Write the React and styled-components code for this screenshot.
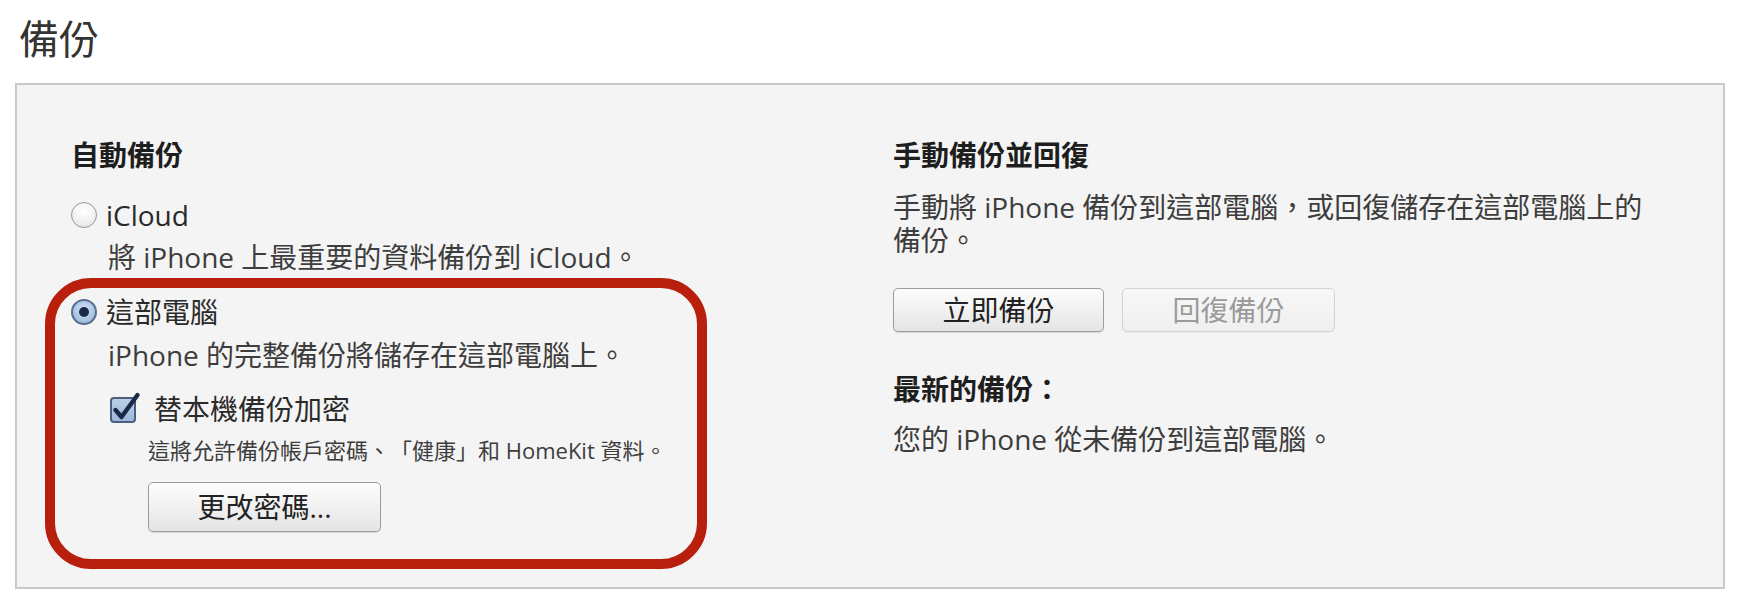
import React from "react";
import styled, { createGlobalStyle } from "styled-components";

const GlobalStyle = createGlobalStyle`
  html, body { margin: 0; padding: 0; background: #ffffff; }
  body {
    font-family: "Open Sans", "Noto Sans CJK TC", sans-serif;
    color: #3d3d3d;
    text-spacing-trim: space-all;
  }
`;

const Page = styled.div`
  width: 1741px;
  height: 604px;
  overflow: hidden;
  background: #fff;
`;

const Title = styled.h1`
  margin: 0;
  padding: 15px 0 0 19px;
  font-size: 40px;
  line-height: 48px;
  font-weight: 400;
  color: #333;
`;

const Panel = styled.section`
  margin: 20px 16px 0 15px;
  border: 2px solid #c9c9c9;
  background: #f4f4f4;
  padding: 52px 0 55px 54px;
  display: grid;
  grid-template-columns: 822px 1fr;
`;

const Column = styled.div`
  display: flex;
  flex-direction: column;
  align-items: flex-start;
`;

const Heading = styled.h2`
  margin: ${(p) => p.$mt || 0}px 0 0 0;
  font-size: 28px;
  line-height: 36px;
  font-weight: 700;
  color: #1e1e1e;
`;

const Text = styled.p`
  margin: ${(p) => p.$mt || 0}px 0 0 ${(p) => p.$indent || 0}px;
  font-size: 28px;
  line-height: 36px;
  color: #3d3d3d;
  white-space: nowrap;
`;

const TextLines = styled.div`
  margin-top: 18px;
  display: flex;
  flex-direction: column;
`;

const Line = styled.span`
  font-size: 28px;
  line-height: 33px;
  height: 33px;
  color: #3d3d3d;
  white-space: nowrap;
`;

const SmallText = styled.p`
  margin: 8px 0 0 77px;
  font-size: 22px;
  line-height: 30px;
  color: #3d3d3d;
  white-space: nowrap;
`;

const OptionRow = styled.label`
  display: flex;
  align-items: center;
  gap: ${(p) => p.$gap || 9}px;
  margin: ${(p) => p.$mt || 0}px 0 0 ${(p) => p.$indent || 0}px;
  font-size: 28px;
  line-height: 36px;
  color: #2a2a2a;
`;

const Radio = styled.span`
  box-sizing: border-box;
  width: 26px;
  height: 26px;
  border-radius: 50%;
  flex: none;
  display: flex;
  align-items: center;
  justify-content: center;
  border: ${(p) => (p.$checked ? "2px solid #586f92" : "1.5px solid #979797")};
  background: ${(p) =>
    p.$checked
      ? "radial-gradient(circle at 50% 40%, #d2e3f4 0%, #a9c5e3 60%, #8eaed3 100%)"
      : "radial-gradient(circle at 50% 35%, #ffffff 0%, #f1f1f1 55%, #dcdcdc 100%)"};
  &::after {
    content: "";
    display: ${(p) => (p.$checked ? "block" : "none")};
    width: 10px;
    height: 10px;
    border-radius: 50%;
    background: #1b2b47;
  }
`;

const Annotated = styled.div`
  position: relative;
  display: flex;
  flex-direction: column;
  align-items: flex-start;
  margin-top: 19px;
  &::after {
    content: "";
    position: absolute;
    box-sizing: border-box;
    top: -16px;
    left: -26px;
    width: 662px;
    bottom: -37px;
    border: 10px solid #b81f0c;
    border-radius: 46px;
    pointer-events: none;
  }
`;

const Button = styled.button`
  box-sizing: border-box;
  margin: ${(p) => p.$mt || 0}px 0 0 ${(p) => p.$ml || 0}px;
  width: ${(p) => p.$w}px;
  height: ${(p) => p.$h}px;
  padding: 0;
  font-family: "Open Sans", "Noto Sans CJK TC", sans-serif;
  font-size: 28px;
  line-height: 1;
  border-radius: 5px;
  border: 1.5px solid ${(p) => (p.disabled ? "#d2d2d2" : "#9d9d9d")};
  color: ${(p) => (p.disabled ? "#9b9b9b" : "#222")};
  background: ${(p) =>
    p.disabled
      ? "linear-gradient(#f8f8f8, #efefef)"
      : "linear-gradient(#fdfdfd, #f1f1f1 50%, #e4e4e4)"};
  box-shadow: ${(p) =>
    p.disabled ? "0 1px 0 rgba(0,0,0,0.04)" : "0 1px 1px rgba(0,0,0,0.12)"};
  display: flex;
  align-items: center;
  justify-content: center;
`;

const ButtonRow = styled.div`
  display: flex;
  gap: 18px;
  margin-top: 31px;
`;

const CheckIcon = () => (
  <svg width="31" height="33" viewBox="0 0 31 33" style={{ flex: "none", marginTop: "-4px" }}>
    <defs>
      <linearGradient id="cbfill" x1="0" y1="0" x2="0" y2="1">
        <stop offset="0" stopColor="#bcd1e8" />
        <stop offset="1" stopColor="#9bb8d8" />
      </linearGradient>
    </defs>
    <rect x="1" y="7" width="24" height="24" rx="3" fill="url(#cbfill)" stroke="#4a5e7e" strokeWidth="2" />
    <path d="M5.5 19 L11.5 26 L27.5 4" fill="none" stroke="#1b2a48" strokeWidth="4.4" strokeLinecap="round" strokeLinejoin="round" />
  </svg>
);

export default function App() {
  return (
    <Page>
      <GlobalStyle />
      <Title>備份</Title>
      <Panel>
        <Column>
          <Heading>自動備份</Heading>
          <OptionRow $mt={24}>
            <Radio />
            iCloud
          </OptionRow>
          <Text $mt={6} $indent={37}>將 iPhone 上最重要的資料備份到 iCloud。</Text>
          <Annotated>
            <OptionRow>
              <Radio $checked />
              這部電腦
            </OptionRow>
            <Text $mt={7} $indent={37}>iPhone 的完整備份將儲存在這部電腦上。</Text>
            <OptionRow $mt={18} $indent={39} $gap={13}>
              <CheckIcon />
              替本機備份加密
            </OptionRow>
            <SmallText>這將允許備份帳戶密碼、「健康」和 HomeKit 資料。</SmallText>
            <Button $mt={17} $ml={77} $w={233} $h={50}>更改密碼...</Button>
          </Annotated>
        </Column>
        <Column>
          <Heading>手動備份並回復</Heading>
          <TextLines>
            <Line>手動將 iPhone 備份到這部電腦，或回復儲存在這部電腦上的</Line>
            <Line>備份。</Line>
          </TextLines>
          <ButtonRow>
            <Button $w={211} $h={44}>立即備份</Button>
            <Button $w={213} $h={44} disabled>回復備份</Button>
          </ButtonRow>
          <Heading $mt={39}>最新的備份：</Heading>
          <Text $mt={14}>您的 iPhone 從未備份到這部電腦。</Text>
        </Column>
      </Panel>
    </Page>
  );
}
